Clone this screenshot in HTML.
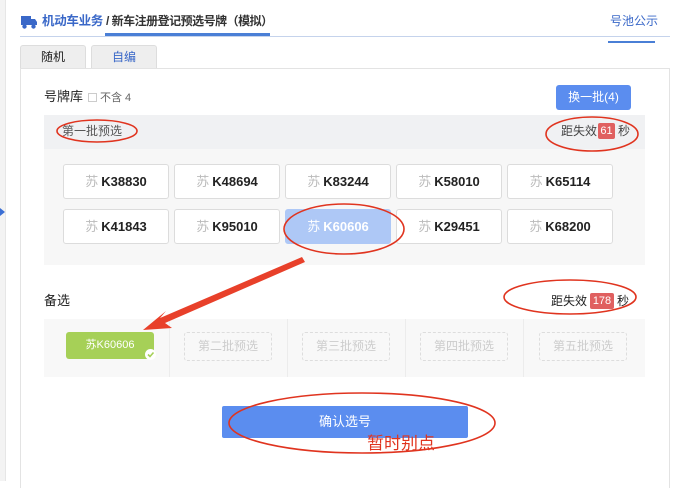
<!DOCTYPE html>
<html><head><meta charset="utf-8"><style>
*{margin:0;padding:0;box-sizing:border-box}
body{width:700px;height:481px;background:#fff;position:relative;overflow:hidden;font-family:"Liberation Sans","Noto Sans CJK SC",sans-serif;font-size:12px;line-height:14px;color:#333}
.a{position:absolute;white-space:nowrap}
.plate{position:absolute;width:106px;height:35px;border:1px solid #dcdcdc;border-radius:3px;background:#fff;text-align:center;line-height:33px;font-size:13px;font-weight:bold;color:#222}
.plate span{color:#bbb;font-weight:normal;margin-right:3px}
.dash{position:absolute;width:88px;height:29px;border:1px dashed #ddd;border-radius:3px;text-align:center;line-height:27px;color:#ccc;font-size:12px}
</style></head><body>
<div class="a" style="left:0;top:0;width:6px;height:481px;background:#f3f3f3;border-right:1px solid #e6e6e6"></div>
<div class="a" style="left:0;top:208px;width:0;height:0;border-left:5px solid #3b6fd4;border-top:4px solid transparent;border-bottom:4px solid transparent"></div>
<!-- header -->
<svg class="a" style="left:20px;top:14px" width="18" height="15" viewBox="0 0 18 15"><path d="M1 2h10v9H1z M11 5h4l2 3v3h-6z" fill="#3a68c8"/><circle cx="4.5" cy="12.5" r="2.2" fill="#3a68c8"/><circle cx="13.5" cy="12.5" r="2.2" fill="#3a68c8"/></svg>
<div class="a" style="left:42px;top:14px;font-size:12.5px;font-weight:bold;color:#3a68c8;letter-spacing:-0.3px">机动车业务</div>
<div class="a" style="left:106px;top:14px;font-size:12px;font-weight:bold;color:#333;letter-spacing:-0.5px">/ 新车注册登记预选号牌（模拟）</div>
<div class="a" style="left:20px;top:36px;width:650px;height:1px;background:#c5d3ec"></div>
<div class="a" style="left:105px;top:33px;width:165px;height:3px;background:#4a7fd6"></div>
<div class="a" style="left:610px;top:14px;font-size:12px;color:#3a68c8">号池公示</div>
<div class="a" style="left:608px;top:41px;width:47px;height:2px;background:#4a7fd6"></div>
<!-- tabs -->
<div class="a" style="left:20px;top:45px;width:66px;height:24px;background:#eee;border:1px solid #ddd;border-bottom:none;border-radius:3px 3px 0 0;text-align:center;line-height:23px;color:#222">随机</div>
<div class="a" style="left:91px;top:45px;width:66px;height:24px;background:#eee;border:1px solid #ddd;border-bottom:none;border-radius:3px 3px 0 0;text-align:center;line-height:23px;color:#3a68c8">自编</div>
<div class="a" style="left:20px;top:68px;width:650px;height:420px;border:1px solid #e3e3e3;border-bottom:none"></div>
<!-- plate pool -->
<div class="a" style="left:44px;top:90px;font-size:13px;color:#222">号牌库</div>
<div class="a" style="left:88px;top:93px;width:9px;height:9px;border:1px solid #ccc"></div>
<div class="a" style="left:100px;top:91px;font-size:11px;color:#666">不含 4</div>
<div class="a" style="left:556px;top:85px;width:75px;height:25px;background:#5b8def;border-radius:3px;color:#fff;text-align:center;line-height:25px;font-size:12px">换一批(4)</div>
<div class="a" style="left:44px;top:115px;width:601px;height:150px;background:#f7f7f7"></div>
<div class="a" style="left:44px;top:115px;width:601px;height:34px;background:#f0f1f3"></div>
<div class="a" style="left:62px;top:124px;color:#555">第一批预选</div>
<div class="a" style="left:561px;top:124px;color:#444">距失效</div>
<div class="a" style="left:598px;top:123px;width:17px;height:16px;background:#e06060;border-radius:2px;color:#fff;text-align:center;line-height:16px;font-size:11px">61</div>
<div class="a" style="left:618px;top:124px;color:#444">秒</div>
<div class="plate" style="left:63px;top:164px"><span>苏</span>K38830</div>
<div class="plate" style="left:174px;top:164px"><span>苏</span>K48694</div>
<div class="plate" style="left:285px;top:164px"><span>苏</span>K83244</div>
<div class="plate" style="left:396px;top:164px"><span>苏</span>K58010</div>
<div class="plate" style="left:507px;top:164px"><span>苏</span>K65114</div>
<div class="plate" style="left:63px;top:209px"><span>苏</span>K41843</div>
<div class="plate" style="left:174px;top:209px"><span>苏</span>K95010</div>
<div class="plate" style="left:285px;top:209px;background:#aec8f6;border-color:#aec8f6;color:#fff"><span style="color:#fff">苏</span>K60606</div>
<div class="plate" style="left:396px;top:209px"><span>苏</span>K29451</div>
<div class="plate" style="left:507px;top:209px"><span>苏</span>K68200</div>
<!-- backup -->
<div class="a" style="left:44px;top:294px;font-size:13px;color:#222">备选</div>
<div class="a" style="left:551px;top:294px;color:#222">距失效</div>
<div class="a" style="left:590px;top:293px;width:24px;height:16px;background:#e06060;border-radius:2px;color:#fff;text-align:center;line-height:16px;font-size:11px">178</div>
<div class="a" style="left:617px;top:294px;color:#222">秒</div>
<div class="a" style="left:44px;top:319px;width:601px;height:58px;background:#f8f8f8"></div>
<div class="a" style="left:169px;top:319px;width:1px;height:58px;background:#ececec"></div>
<div class="a" style="left:287px;top:319px;width:1px;height:58px;background:#ececec"></div>
<div class="a" style="left:405px;top:319px;width:1px;height:58px;background:#ececec"></div>
<div class="a" style="left:523px;top:319px;width:1px;height:58px;background:#ececec"></div>
<div class="a" style="left:66px;top:332px;width:88px;height:27px;background:#a6d057;border-radius:3px;color:#fff;text-align:center;line-height:27px;font-size:11px">苏K60606</div>
<div class="a" style="left:145px;top:349px;width:11px;height:11px;border-radius:50%;background:#fff"></div>
<svg class="a" style="left:145px;top:349px" width="11" height="11"><path d="M3 5.5l2 2 3.5-4" stroke="#a6d057" stroke-width="1.6" fill="none"/></svg>
<div class="dash" style="left:184px;top:332px">第二批预选</div>
<div class="dash" style="left:302px;top:332px">第三批预选</div>
<div class="dash" style="left:420px;top:332px">第四批预选</div>
<div class="dash" style="left:539px;top:332px">第五批预选</div>
<div class="a" style="left:222px;top:406px;width:246px;height:32px;background:#5b8def;border-radius:2px;color:#fff;text-align:center;line-height:32px;font-size:13px">确认选号</div>
<!-- annotations -->
<svg class="a" style="left:0;top:0" width="700" height="481">
<g fill="none" stroke="#e0341f" stroke-width="1.6">
<ellipse cx="97" cy="131" rx="40" ry="11"/>
<ellipse cx="592" cy="134" rx="46" ry="17"/>
<ellipse cx="344" cy="229" rx="60" ry="25"/>
<ellipse cx="570" cy="297" rx="66" ry="17"/>
<ellipse cx="362" cy="423" rx="133" ry="30"/>
</g>
<path d="M302 257 L160 318 L166 311 L143 330 L172 328 L165 323 L305 262 Z" fill="#e8402a"/>
<text x="367" y="449" font-size="17" fill="#e0341f" font-family="Liberation Sans, Noto Sans CJK SC, sans-serif">暂时别点</text>
</svg>
</body></html>
